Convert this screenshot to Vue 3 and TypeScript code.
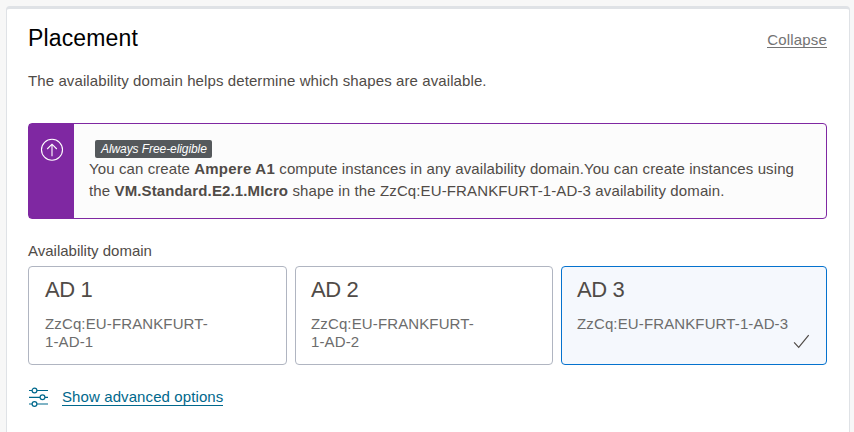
<script setup lang="ts">
interface Domain {
  title: string
  lines: string[]
}

const domains: Domain[] = [
  { title: 'AD 1', lines: ['ZzCq:EU-FRANKFURT-', '1-AD-1'] },
  { title: 'AD 2', lines: ['ZzCq:EU-FRANKFURT-', '1-AD-2'] },
  { title: 'AD 3', lines: ['ZzCq:EU-FRANKFURT-1-AD-3'] },
]
const selected = 2
</script>

<template>
  <main class="page">
    <section class="panel">
      <header class="head">
        <h2 class="heading">Placement</h2>
        <a class="collapse">Collapse</a>
      </header>
      <p class="intro">The availability domain helps determine which shapes are available.</p>

      <div class="notice">
        <div class="notice-side">
          <svg width="24" height="24" viewBox="0 0 24 24" fill="none" stroke="#fff" stroke-width="1.1">
            <circle cx="12" cy="11.8" r="10.5" />
            <path d="M12 18.3V6.3M7.2 11L12 6.2L16.8 11" />
          </svg>
        </div>
        <div class="notice-body">
          <span class="badge">Always Free-eligible</span>
          <div class="line"><span>You can create </span><b class="wide">Ampere A1</b><span> compute instances in any availability domain.You can create instances using</span></div>
          <div class="line second"><span>the </span><b>VM.Standard.E2.1.MIcro</b><span> shape in the ZzCq:EU-FRANKFURT-1-AD-3 availability domain.</span></div>
        </div>
      </div>

      <div class="label">Availability domain</div>
      <div class="cards">
        <div v-for="(d, i) in domains" :key="d.title" class="card" :class="{ active: i === selected }">
          <div class="card-title">{{ d.title }}</div>
          <div class="card-desc">
            <div v-for="l in d.lines" :key="l">{{ l }}</div>
          </div>
          <svg v-if="i === selected" class="check" width="18" height="16" viewBox="0 0 18 16" fill="none" stroke="#504b47" stroke-width="1.2">
            <path d="M1.1 8.4L5.7 13.4L15.7 1.1" />
          </svg>
        </div>
      </div>

      <div class="advanced">
        <svg width="20" height="20" viewBox="0 0 20 20" fill="none" stroke="#00688c" stroke-width="1.2">
          <path d="M1 3.5H4.1M8.9 3.5H20M1 10.3H12.1M16.9 10.3H20M1 17H4.1M8.9 17H20" />
          <circle cx="6.5" cy="3.5" r="2.4" />
          <circle cx="14.5" cy="10.3" r="2.4" />
          <circle cx="6.5" cy="17" r="2.4" />
        </svg>
        <a class="advanced-link">Show advanced options</a>
      </div>
    </section>
  </main>
</template>

<style>
body {
  background: #f7f7f7;
  overflow: hidden;
}
</style>

<style scoped>
.page {
  box-sizing: border-box;
  height: 432px;
  padding: 6px 4px 0 6px;
  overflow: hidden;
  font-family: "Liberation Sans", Arial, sans-serif;
  font-size: 15px;
  letter-spacing: 0.1px;
  color: #504b47;
  white-space: nowrap;
}
.panel {
  box-sizing: border-box;
  height: 450px;
  padding: 0 22px 0 21px;
  background: #fff;
  border: 1px solid #dfe2e6;
  border-top-width: 3px;
  border-radius: 4px;
}
.head {
  display: flex;
  justify-content: space-between;
  height: 58px;
}
.heading {
  margin: 13px 0 0;
  font-size: 23px;
  line-height: 32px;
  font-weight: 400;
  letter-spacing: 0.15px;
  color: #000;
}
.collapse {
  align-self: flex-start;
  margin-top: 22px;
  height: 16px;
  line-height: 18px;
  letter-spacing: 0.18px;
  border-bottom: 1px solid #737373;
  color: #737373;
}
.intro {
  margin: 4px 0 0;
  line-height: 20px;
}
.notice {
  display: flex;
  box-sizing: border-box;
  height: 96px;
  margin-top: 32px;
  border: 1px solid #7f28a2;
  border-radius: 4px;
  background: #fcfcfc;
}
.notice-side {
  width: 45px;
  flex: none;
  background: #7f28a2;
}
.notice-side svg {
  display: block;
  margin: 14px 0 0 11px;
}
.notice-body {
  padding: 16px 0 0 15px;
}
.badge {
  display: block;
  box-sizing: border-box;
  width: 117px;
  height: 18px;
  margin-left: 6px;
  padding-left: 6px;
  border-radius: 2px;
  background: #55595c;
  color: #fff;
  font-size: 12px;
  line-height: 18px;
  letter-spacing: -0.08px;
  font-style: italic;
}
.line {
  height: 22px;
  line-height: 22px;
  white-space: pre;
}
.line.second {
  letter-spacing: 0.125px;
}
.wide {
  letter-spacing: 0.24px;
}
.label {
  margin-top: 22px;
  height: 20px;
  line-height: 20px;
  letter-spacing: 0;
}
.cards {
  display: grid;
  grid-template-columns: 259px 258px 266px;
  gap: 8px;
  margin-top: 5px;
}
.card {
  position: relative;
  box-sizing: border-box;
  height: 99px;
  padding: 8px 0 0 16px;
  border: 1px solid #b0b5c1;
  border-radius: 4px;
}
.card + .card {
  padding-left: 15px;
}
.card.active {
  border-color: #0572ce;
  background: #f5f8fd;
}
.card-title {
  font-size: 22px;
  line-height: 30px;
  letter-spacing: -0.35px;
}
.card-desc {
  margin-top: 10px;
  line-height: 18px;
  letter-spacing: 0.13px;
  color: #6c6c6c;
}
.check {
  position: absolute;
  right: 15px;
  bottom: 14px;
}
.advanced {
  display: flex;
  align-items: center;
  gap: 14px;
  height: 20px;
  margin-top: 22px;
}
.advanced-link {
  height: 17px;
  line-height: 18px;
  border-bottom: 1px solid #00688c;
  color: #00688c;
}
</style>
